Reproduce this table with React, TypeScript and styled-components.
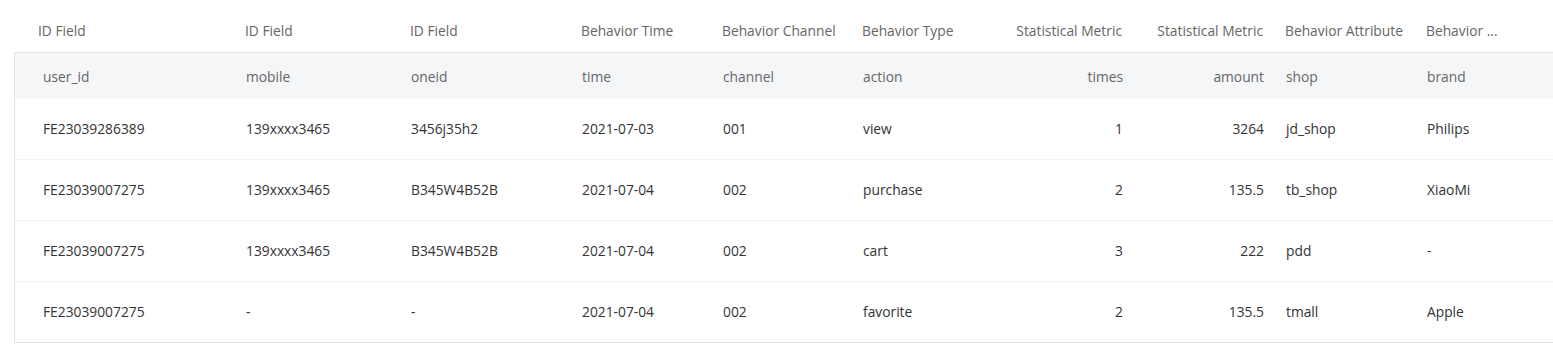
import * as React from "react";
import styled, { createGlobalStyle } from "styled-components";

const GlobalStyle = createGlobalStyle`
  body {
    margin: 0;
    background: #ffffff;
    font-family: "Open Sans", "Noto Sans", "Noto Sans CJK SC", sans-serif;
  }
`;

type Variant = "head" | "field" | "data";

const columns = "220px 165px 171px 141px 140px 141px 141px 141px 141px 1fr";

const heights: Record<Variant, string> = { head: "44px", field: "46px", data: "60px" };

const Wrapper = styled.div`
  padding-left: 14px;
`;

const Row = styled.div<{ $variant: Variant }>`
  display: grid;
  grid-template-columns: ${columns};
  height: ${(p) => heights[p.$variant]};
  padding-top: ${(p) => (p.$variant === "head" ? "8px" : "0")};
  align-items: center;
  background: ${(p) => (p.$variant === "field" ? "#f5f6f8" : "#ffffff")};
  border-bottom: ${(p) =>
    p.$variant === "head" ? "1px solid #e2e3e6" : p.$variant === "data" ? "1px solid #f0f1f3" : "none"};
  &:last-child {
    border-bottom-color: #e2e3e6;
  }
`;

const Body = styled.div`
  border-left: 1px solid #e2e3e6;
`;

const Cell = styled.div<{ $right?: boolean; $variant: Variant; $first?: boolean }>`
  padding: 0 11px;
  padding-left: ${(p) => (p.$first ? (p.$variant === "head" ? "24px" : "28px") : "11px")};
  font-size: 13.8px;
  margin-top: ${(p) => (p.$variant === "data" ? "-2px" : "0")};
  color: ${(p) => (p.$variant === "data" ? "#333333" : "#666666")};
  text-align: ${(p) => (p.$right ? "right" : "left")};
  white-space: nowrap;
`;

const headers = [
  "ID Field",
  "ID Field",
  "ID Field",
  "Behavior Time",
  "Behavior Channel",
  "Behavior Type",
  "Statistical Metric",
  "Statistical Metric",
  "Behavior Attribute",
  "Behavior ...",
];

const fields = ["user_id", "mobile", "oneid", "time", "channel", "action", "times", "amount", "shop", "brand"];

const rows = [
  ["FE23039286389", "139xxxx3465", "3456j35h2", "2021-07-03", "001", "view", "1", "3264", "jd_shop", "Philips"],
  ["FE23039007275", "139xxxx3465", "B345W4B52B", "2021-07-04", "002", "purchase", "2", "135.5", "tb_shop", "XiaoMi"],
  ["FE23039007275", "139xxxx3465", "B345W4B52B", "2021-07-04", "002", "cart", "3", "222", "pdd", "-"],
  ["FE23039007275", "-", "-", "2021-07-04", "002", "favorite", "2", "135.5", "tmall", "Apple"],
];

const rightCols = [6, 7];

const App: React.FC = () => {
  return (
    <>
      <GlobalStyle />
      <Wrapper>
        <Row $variant="head">
          {headers.map((h, i) => (
            <Cell key={i} $variant="head" $first={i === 0} $right={rightCols.includes(i)}>
              {h}
            </Cell>
          ))}
        </Row>
        <Body>
          <Row $variant="field">
            {fields.map((f, i) => (
              <Cell key={i} $variant="field" $first={i === 0} $right={rightCols.includes(i)}>
                {f}
              </Cell>
            ))}
          </Row>
          {rows.map((r, ri) => (
            <Row key={ri} $variant="data">
              {r.map((v, i) => (
                <Cell key={i} $variant="data" $first={i === 0} $right={rightCols.includes(i)}>
                  {v}
                </Cell>
              ))}
            </Row>
          ))}
        </Body>
      </Wrapper>
    </>
  );
};

export default App;
